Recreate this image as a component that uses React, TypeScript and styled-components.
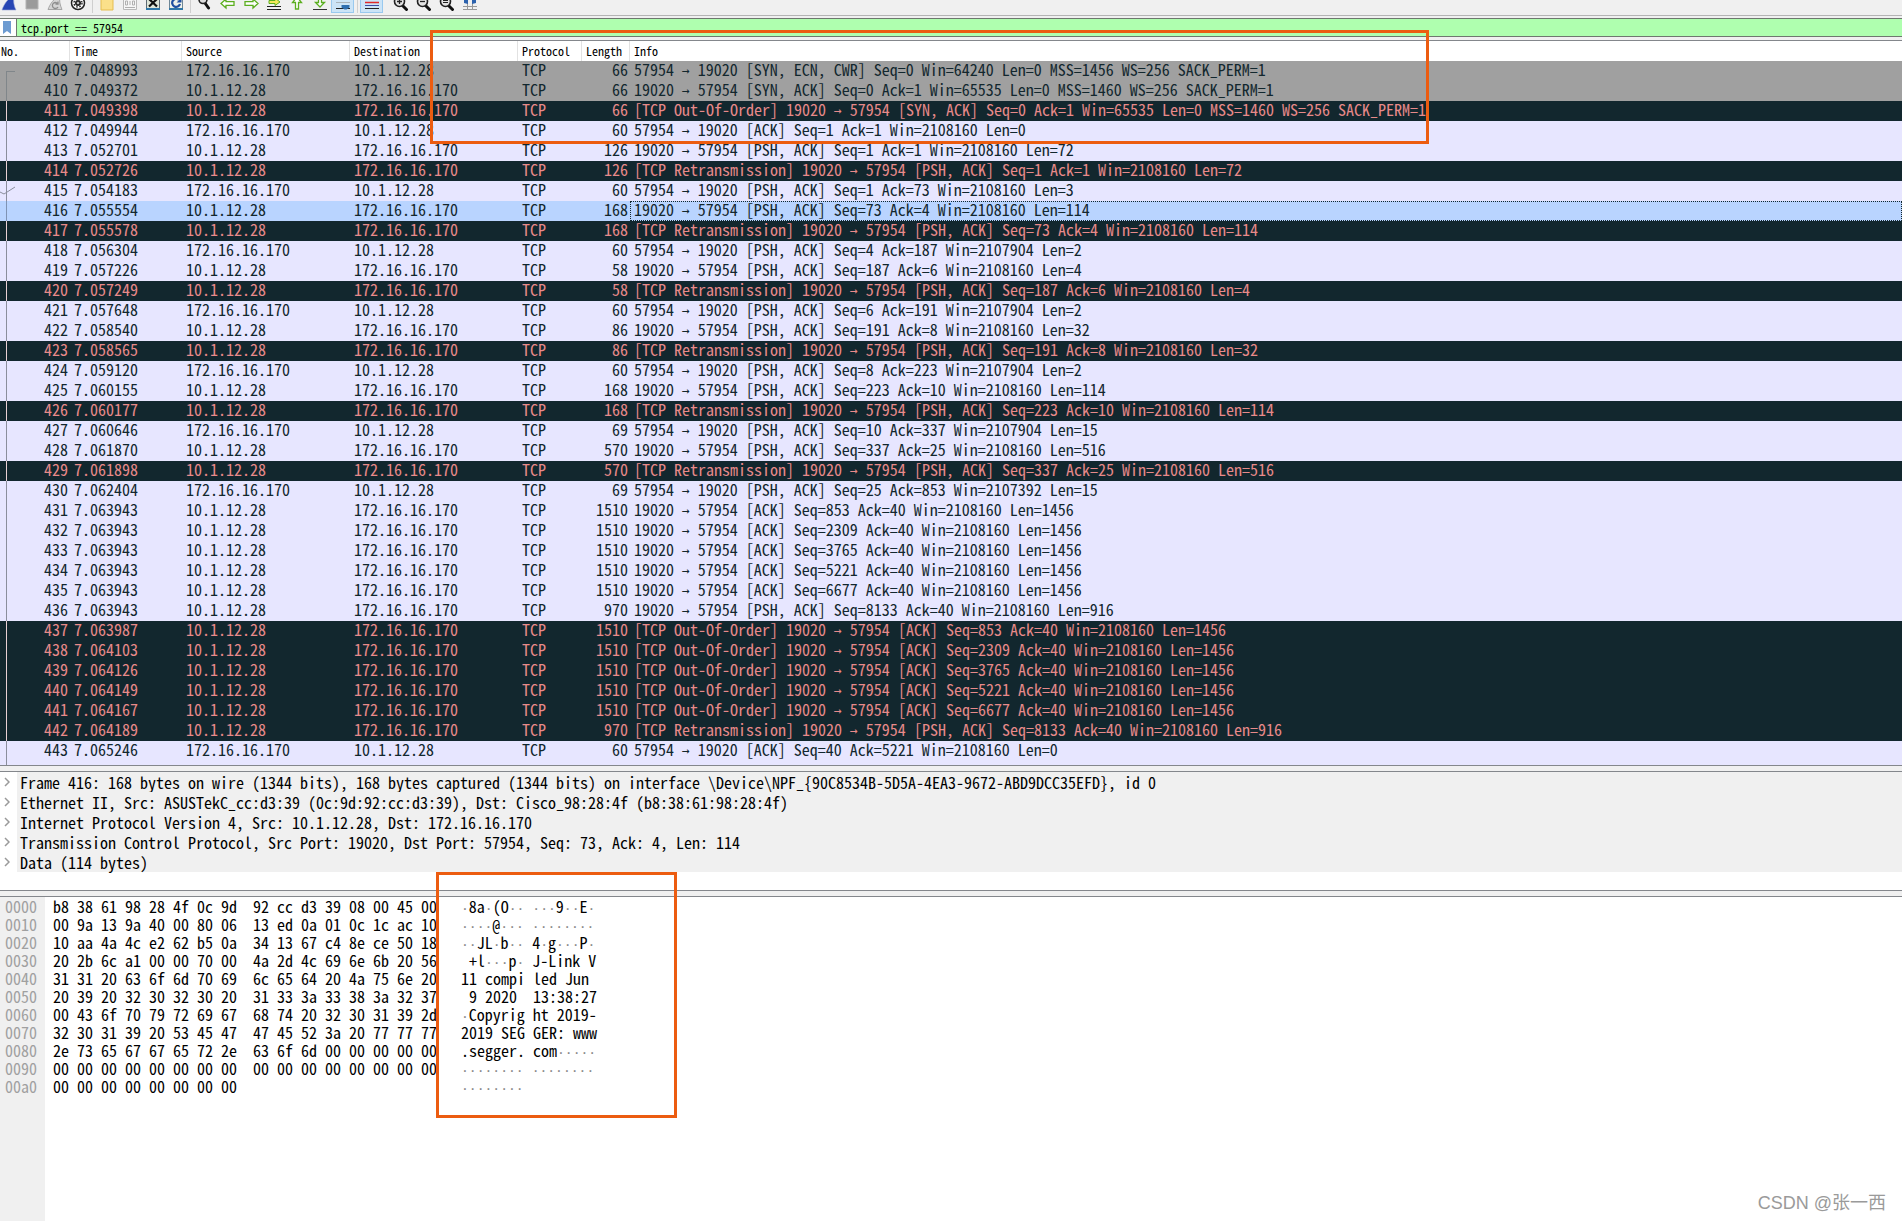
import React from "react";
import styled, { createGlobalStyle, css } from "styled-components";

const MONO = '"Noto Sans Mono CJK SC", "Liberation Mono", monospace';

const Global = createGlobalStyle`
  *, *::before, *::after { box-sizing: border-box; }
  html, body { margin: 0; padding: 0; }
  body { background: #fff; color: #000; font-family: ${MONO}; }
  button, input { font: inherit; color: inherit; margin: 0; padding: 0; border: 0; background: none; border-radius: 0; }
`;

const Window = styled.main`
  position: relative;
  display: flex;
  flex-direction: column;
  min-height: 100vh;
  background: #f0f0f0;
`;

/* ---------- toolbar ---------- */

const Toolbar = styled.div`
  display: flex;
  align-items: flex-end;
  height: 16px;
  margin-left: -3px;
  padding-bottom: 2px;
  border-bottom: 1px solid #b4b4b4;
  overflow: hidden;
`;

const ToolButton = styled.button<{ $on?: boolean }>`
  display: flex;
  justify-content: center;
  align-items: flex-end;
  flex: none;
  width: 23px;
  height: 22px;
  padding-bottom: 2px;
  ${(p) =>
    p.$on &&
    css`
      background: #cce4f7;
      border: 1px solid #99c9ef;
      padding-bottom: 1px;
    `}
`;

const ToolGap = styled.span<{ $line?: boolean }>`
  flex: none;
  width: 6px;
  height: 14px;
  background: ${(p) =>
    p.$line ? "linear-gradient(#cfcfcf, #cfcfcf) center / 1px 100% no-repeat" : "none"};
`;

const Glyph = styled.svg`
  display: block;
  width: 16px;
  height: 16px;
  flex: none;
`;

const magnifier = (
  <>
    <path d="M9.5 10.5 13.5 14.5" stroke="#111" strokeWidth="3" strokeLinecap="round" />
    <circle cx="6.5" cy="6.5" r="5" fill="#e4e4e4" stroke="#222" strokeWidth="1.6" />
  </>
);

const leftArrow = "M1 8.5 6 4v2.7h8v3.6H6V13z";

type Tool = { name: string; art: React.ReactNode; on?: boolean } | "line" | "gap";

const tools: Tool[] = [
  { name: "Start capture", art: <path d="M1 15C3 9 7 3 13 1c-1 5 0 10 2 14z" fill="#2746b4" stroke="#9aa6d6" strokeWidth=".6" /> },
  { name: "Stop capture", art: <path d="M2 2h12v12H2z" fill="#9b9b9b" stroke="#b4b4b4" /> },
  {
    name: "Restart capture",
    art: (
      <>
        <path d="M1 14.500C3 9 7 3 13 1c-1 5 0 9 2 13.500z" fill="#d4d4d4" stroke="#a6a6a6" />
        <path d="M11 9a3 3 0 1 0 0 3M11 6.500V9H8.500" fill="none" stroke="#8e8e8e" strokeWidth="1.300" />
      </>
    ),
  },
  {
    name: "Capture options",
    art: (
      <>
        <circle cx="8" cy="8" r="6.500" fill="#fff" stroke="#222" strokeWidth="1.500" />
        <circle cx="8" cy="8" r="3" fill="#222" />
        <circle cx="8" cy="8" r="4" fill="none" stroke="#222" strokeWidth="1.400" strokeDasharray="1.600 1.600" />
        <circle cx="8" cy="8" r="1.300" fill="#bbb" />
      </>
    ),
  },
  "line",
  { name: "Open", art: <path d="M2 1h8l2 3h2v11H2z" fill="#fbe08a" stroke="#e5bd4e" /> },
  {
    name: "Save",
    art: (
      <>
        <path d="M1.500.5h13v14h-13z" fill="#f6f6f6" stroke="#b9b9b9" />
        <path d="M3.500 6v4h2V6zM8 6v4M10.500 6v4h2V6zM3 12.500h10" fill="none" stroke="#b0b0b0" />
      </>
    ),
  },
  {
    name: "Close",
    art: (
      <>
        <path d="M1.500.5h13v14h-13z" fill="#dfe5d8" stroke="#5d6a72" />
        <path d="M1 14h14" stroke="#2f77a8" strokeWidth="2" />
        <path d="m4 4 8 7.500M12 4l-8 7.500" stroke="#111" strokeWidth="2.200" />
      </>
    ),
  },
  {
    name: "Reload",
    art: (
      <>
        <path d="M1.500.5h13v14h-13z" fill="#eef1ea" stroke="#6e8797" />
        <path d="M1 14h14" stroke="#2f77a8" strokeWidth="2" />
        <path d="M12 9a4 4 0 1 1-1-4" fill="none" stroke="#1f4fa0" strokeWidth="2.200" />
        <path d="M8.500 7.500h5V3z" fill="#1f4fa0" />
      </>
    ),
  },
  "line",
  {
    name: "Find packet",
    art: (
      <>
        <path d="m8 8 3.500 5" stroke="#111" strokeWidth="3" strokeLinecap="round" />
        <circle cx="6" cy="4.500" r="4" fill="#ddd" stroke="#222" strokeWidth="1.600" />
      </>
    ),
  },
  { name: "Previous packet", art: <path d={leftArrow} fill="#fff" stroke="#5bae1f" strokeWidth="1.300" /> },
  { name: "Next packet", art: <path d={leftArrow} transform="matrix(-1 0 0 1 16 0)" fill="#fff" stroke="#5bae1f" strokeWidth="1.300" /> },
  {
    name: "Go to packet",
    art: (
      <>
        <path d="M1 3.500h14M1 11.500h14M1 14.500h14" stroke="#222" />
        <path d="M3 5.500h6V3l5 4-5 3.500V8.500H3z" fill="#f4e95a" stroke="#5bae1f" />
      </>
    ),
  },
  {
    name: "First packet",
    art: <path d="M8 2 3.500 7.500h3V14h3V7.500h3z" fill="#fff" stroke="#5bae1f" strokeWidth="1.300" />,
  },
  {
    name: "Last packet",
    art: (
      <>
        <path d="M8 12 3.500 7.500h3V1h3v6.500h3z" fill="#fff" stroke="#5bae1f" strokeWidth="1.300" />
        <path d="M1 14.500h14" stroke="#333" />
      </>
    ),
  },
  {
    name: "Auto scroll",
    on: true,
    art: (
      <>
        <path d="M1 4.500h14M1 7.500h14" stroke="#a9b3ba" />
        <path d="M1 13.500h14" stroke="#222" />
        <path d="M6.500 10h8v2.500l-3 2h-2l-3-2z" fill="#2e6fb0" />
      </>
    ),
  },
  "line",
  {
    name: "Colorize",
    on: true,
    art: (
      <>
        <path d="M1 1.500h14M1 7.500h14" stroke="#e02a2a" strokeWidth="1.600" />
        <path d="M1 4.500h14M1 10.500h14" stroke="#3c4aa5" />
        <path d="M1 13.500h14" stroke="#222" />
      </>
    ),
  },
  "gap",
  { name: "Zoom in", art: <>{magnifier}<path d="M4 6.500h5M6.500 4v5" stroke="#222" strokeWidth="1.300" /></> },
  { name: "Zoom out", art: <>{magnifier}<path d="M4 6.500h5" stroke="#222" strokeWidth="1.300" /></> },
  { name: "Normal size", art: <>{magnifier}<path d="M4 5.500h5M4 7.500h5" stroke="#222" strokeWidth="1.100" /></> },
  {
    name: "Resize columns",
    art: (
      <>
        <path d="M1 11.500h14M1 14.500h14M5.500 3v12M10.500 3v12" stroke="#999" />
        <path d="M2 3h4v6L2 8zM14 3h-4v6l4-1z" fill="#2c62ad" />
      </>
    ),
  },
];

/* ---------- display filter ---------- */

const FilterBar = styled.label`
  display: flex;
  align-items: stretch;
  height: 19px;
  margin-top: 2px;
  border: solid #6f776f;
  border-width: 1px 0;
  background: #afffaf;
`;

const Bookmark = styled.span`
  display: flex;
  align-items: center;
  width: 17px;
  padding-left: 3px;
  background: #fff;
  border-right: 1px solid #6f776f;
`;

const FilterInput = styled.input`
  flex: 1;
  min-width: 0;
  padding-left: 4px;
  font-size: 12px;
  line-height: 16px;
  outline: none;
`;

/* ---------- packet list ---------- */

type Tone = "syn" | "tcp" | "bad" | "selected";

const tones: Record<Tone, { bg: string; fg: string; line: string }> = {
  syn: { bg: "#a0a0a0", fg: "#12272e", line: "#80868a" },
  tcp: { bg: "#e7e6ff", fg: "#12272e", line: "#8b8e9c" },
  bad: { bg: "#12272e", fg: "#e88a8a", line: "#e8d0d4" },
  selected: { bg: "#b9d4ff", fg: "#12272e", line: "#7f93b4" },
};

const PacketPane = styled.section`
  margin-top: 3px;
  border: solid #84878c;
  border-width: 1px 0;
  background: #fff;
`;

const PacketTable = styled.table`
  width: 100%;
  table-layout: fixed;
  border-collapse: separate;
  border-spacing: 0;
  font-size: 16px;
  line-height: 16px;
`;

const Col = styled.col<{ $w?: number }>`
  width: ${(p) => (p.$w ? `${p.$w}px` : "auto")};
`;

const HeadCell = styled.th<{ $first?: boolean }>`
  height: 20px;
  padding: 0 0 0 ${(p) => (p.$first ? 1 : 4)}px;
  border-right: 1px solid #e2e2e2;
  background: #fff;
  font-size: 12px;
  font-weight: 400;
  line-height: 20px;
  text-align: left;
  white-space: nowrap;
  &:last-child { border-right: 0; }
`;

const PacketRow = styled.tr<{ $tone: Tone }>`
  background: ${(p) => tones[p.$tone].bg};
  color: ${(p) => tones[p.$tone].fg};
  stroke: ${(p) => tones[p.$tone].line};
`;

const Cell = styled.td<{ $right?: boolean; $focus?: boolean }>`
  height: 20px;
  padding: 0 ${(p) => (p.$right ? 2 : 0)}px 0 ${(p) => (p.$right ? 0 : 4)}px;
  text-align: ${(p) => (p.$right ? "right" : "left")};
  vertical-align: top;
  white-space: pre;
  ${(p) =>
    p.$focus &&
    css`
      outline: 1px dotted #12272e;
      outline-offset: -1px;
    `}
`;

const NumberCell = styled.td`
  height: 20px;
  padding: 0 2px 0 0;
  vertical-align: top;
`;

const NumberLine = styled.div`
  display: flex;
  justify-content: space-between;
  align-items: flex-start;
  height: 20px;
`;

const RelationMark = styled.svg`
  display: block;
  flex: none;
  width: 16px;
  height: 20px;
  fill: none;
`;

/* The text face draws arrows and middle dots two cells wide, so they use another one. */
const Arrow = styled.span`
  font-family: "DejaVu Sans Mono", monospace;
  font-size: 13px;
  line-height: 13px;
  vertical-align: 1px;
`;

const PeekRow = styled.div`
  height: 4px;
  overflow: hidden;
  background: ${tones.tcp.bg};
  stroke: ${tones.tcp.line};
`;

const R = "TCP Retransmission";
const O = "TCP Out-Of-Order";
const A = "ACK";
const P = "PSH, ACK";

type Packet = {
  no: number;
  time: string;
  up: boolean; // client (172.16.16.170) to probe (10.1.12.28)
  len: number;
  note: string;
  tail: string;
  tone: Tone;
};

const pk = (no: number, time: string, up: number, len: number, note: string, flags: string, rest: string, tone?: Tone): Packet => ({
  no,
  time: "7." + time,
  up: up === 1,
  len,
  note,
  tail: `[${flags}] ${rest}`,
  tone: tone ?? (note ? "bad" : "tcp"),
});

const packets: Packet[] = [
  pk(409, "048993", 1, 66, "", "SYN, ECN, CWR", "Seq=0 Win=64240 Len=0 MSS=1456 WS=256 SACK_PERM=1", "syn"),
  pk(410, "049372", 0, 66, "", "SYN, ACK", "Seq=0 Ack=1 Win=65535 Len=0 MSS=1460 WS=256 SACK_PERM=1", "syn"),
  pk(411, "049398", 0, 66, O, "SYN, ACK", "Seq=0 Ack=1 Win=65535 Len=0 MSS=1460 WS=256 SACK_PERM=1"),
  pk(412, "049944", 1, 60, "", A, "Seq=1 Ack=1 Win=2108160 Len=0"),
  pk(413, "052701", 0, 126, "", P, "Seq=1 Ack=1 Win=2108160 Len=72"),
  pk(414, "052726", 0, 126, R, P, "Seq=1 Ack=1 Win=2108160 Len=72"),
  pk(415, "054183", 1, 60, "", P, "Seq=1 Ack=73 Win=2108160 Len=3"),
  pk(416, "055554", 0, 168, "", P, "Seq=73 Ack=4 Win=2108160 Len=114", "selected"),
  pk(417, "055578", 0, 168, R, P, "Seq=73 Ack=4 Win=2108160 Len=114"),
  pk(418, "056304", 1, 60, "", P, "Seq=4 Ack=187 Win=2107904 Len=2"),
  pk(419, "057226", 0, 58, "", P, "Seq=187 Ack=6 Win=2108160 Len=4"),
  pk(420, "057249", 0, 58, R, P, "Seq=187 Ack=6 Win=2108160 Len=4"),
  pk(421, "057648", 1, 60, "", P, "Seq=6 Ack=191 Win=2107904 Len=2"),
  pk(422, "058540", 0, 86, "", P, "Seq=191 Ack=8 Win=2108160 Len=32"),
  pk(423, "058565", 0, 86, R, P, "Seq=191 Ack=8 Win=2108160 Len=32"),
  pk(424, "059120", 1, 60, "", P, "Seq=8 Ack=223 Win=2107904 Len=2"),
  pk(425, "060155", 0, 168, "", P, "Seq=223 Ack=10 Win=2108160 Len=114"),
  pk(426, "060177", 0, 168, R, P, "Seq=223 Ack=10 Win=2108160 Len=114"),
  pk(427, "060646", 1, 69, "", P, "Seq=10 Ack=337 Win=2107904 Len=15"),
  pk(428, "061870", 0, 570, "", P, "Seq=337 Ack=25 Win=2108160 Len=516"),
  pk(429, "061898", 0, 570, R, P, "Seq=337 Ack=25 Win=2108160 Len=516"),
  pk(430, "062404", 1, 69, "", P, "Seq=25 Ack=853 Win=2107392 Len=15"),
  pk(431, "063943", 0, 1510, "", A, "Seq=853 Ack=40 Win=2108160 Len=1456"),
  pk(432, "063943", 0, 1510, "", A, "Seq=2309 Ack=40 Win=2108160 Len=1456"),
  pk(433, "063943", 0, 1510, "", A, "Seq=3765 Ack=40 Win=2108160 Len=1456"),
  pk(434, "063943", 0, 1510, "", A, "Seq=5221 Ack=40 Win=2108160 Len=1456"),
  pk(435, "063943", 0, 1510, "", A, "Seq=6677 Ack=40 Win=2108160 Len=1456"),
  pk(436, "063943", 0, 970, "", P, "Seq=8133 Ack=40 Win=2108160 Len=916"),
  pk(437, "063987", 0, 1510, O, A, "Seq=853 Ack=40 Win=2108160 Len=1456"),
  pk(438, "064103", 0, 1510, O, A, "Seq=2309 Ack=40 Win=2108160 Len=1456"),
  pk(439, "064126", 0, 1510, O, A, "Seq=3765 Ack=40 Win=2108160 Len=1456"),
  pk(440, "064149", 0, 1510, O, A, "Seq=5221 Ack=40 Win=2108160 Len=1456"),
  pk(441, "064167", 0, 1510, O, A, "Seq=6677 Ack=40 Win=2108160 Len=1456"),
  pk(442, "064189", 0, 970, R, P, "Seq=8133 Ack=40 Win=2108160 Len=916"),
  pk(443, "065246", 1, 60, "", A, "Seq=40 Ack=5221 Win=2108160 Len=0"),
];

const CLIENT = "172.16.16.170";
const PROBE = "10.1.12.28";

function PacketLine({ p }: { p: Packet }) {
  const first = p.no === 409;
  return (
    <PacketRow $tone={p.tone}>
      <NumberCell>
        <NumberLine>
          <RelationMark viewBox="0 0 16 20" aria-hidden="true">
            <path d={first ? "M6.500 20V10.500H15" : "M6.500 0V20"} shapeRendering="crispEdges" />
            {p.no === 415 && <path d="M0 11 4 13 15 6" />}
          </RelationMark>
          {p.no}
        </NumberLine>
      </NumberCell>
      <Cell>{p.time}</Cell>
      <Cell>{p.up ? CLIENT : PROBE}</Cell>
      <Cell>{p.up ? PROBE : CLIENT}</Cell>
      <Cell>TCP</Cell>
      <Cell $right>{p.len}</Cell>
      <Cell $focus={p.tone === "selected"}>
        {p.note && `[${p.note}] `}
        {p.up ? "57954 " : "19020 "}
        <Arrow>→</Arrow>
        {p.up ? " 19020 " : " 57954 "}
        {p.tail}
      </Cell>
    </PacketRow>
  );
}

/* ---------- packet details ---------- */

const DetailPane = styled.section`
  margin-top: 5px;
  padding-bottom: 18px;
  border: solid #84878c;
  border-width: 1px 0;
  background: #fff;
`;

const DetailRow = styled.div`
  display: flex;
  height: 20px;
  font-size: 16px;
  line-height: 20px;
`;

const Toggle = styled.button`
  display: flex;
  justify-content: center;
  align-items: center;
  flex: none;
  width: 17px;
  padding-right: 3px;
`;

const DetailText = styled.span`
  flex: 1;
  padding-left: 3px;
  background: #f0f0f0;
  white-space: pre;
`;

const details = [
  "Frame 416: 168 bytes on wire (1344 bits), 168 bytes captured (1344 bits) on interface \\Device\\NPF_{90C8534B-5D5A-4EA3-9672-ABD9DCC35EFD}, id 0",
  "Ethernet II, Src: ASUSTekC_cc:d3:39 (0c:9d:92:cc:d3:39), Dst: Cisco_98:28:4f (b8:38:61:98:28:4f)",
  "Internet Protocol Version 4, Src: 10.1.12.28, Dst: 172.16.16.170",
  "Transmission Control Protocol, Src Port: 19020, Dst Port: 57954, Seq: 73, Ack: 4, Len: 114",
  "Data (114 bytes)",
];

/* ---------- packet bytes ---------- */

const BytesPane = styled.section`
  display: flex;
  flex: 1;
  margin-top: 5px;
  border-top: 1px solid #84878c;
  background: #fff;
  font-size: 16px;
  line-height: 18px;
  white-space: pre;
`;

const Offsets = styled.div`
  flex: none;
  width: 45px;
  padding-left: 5px;
  background: #f0f0f0;
  color: #a0a0a0;
`;

const Hex = styled.div`
  flex: none;
  width: 408px;
  padding-left: 8px;
`;

const Ascii = styled.div`
  padding-left: 8px;
`;

const ByteLine = styled.div`
  height: 18px;
`;

const Dots = styled.span`
  color: #8c8c8c;
  font-family: "DejaVu Sans Mono", monospace;
  font-size: 13px;
  line-height: 13px;
`;

const bytes: [string, string, string][] = [
  ["0000", "b8 38 61 98 28 4f 0c 9d  92 cc d3 39 08 00 45 00", "·8a·(O·· ···9··E·"],
  ["0010", "00 9a 13 9a 40 00 80 06  13 ed 0a 01 0c 1c ac 10", "····@··· ········"],
  ["0020", "10 aa 4a 4c e2 62 b5 0a  34 13 67 c4 8e ce 50 18", "··JL·b·· 4·g···P·"],
  ["0030", "20 2b 6c a1 00 00 70 00  4a 2d 4c 69 6e 6b 20 56", " +l···p· J-Link V"],
  ["0040", "31 31 20 63 6f 6d 70 69  6c 65 64 20 4a 75 6e 20", "11 compi led Jun "],
  ["0050", "20 39 20 32 30 32 30 20  31 33 3a 33 38 3a 32 37", " 9 2020  13:38:27"],
  ["0060", "00 43 6f 70 79 72 69 67  68 74 20 32 30 31 39 2d", "·Copyrig ht 2019-"],
  ["0070", "32 30 31 39 20 53 45 47  47 45 52 3a 20 77 77 77", "2019 SEG GER: www"],
  ["0080", "2e 73 65 67 67 65 72 2e  63 6f 6d 00 00 00 00 00", ".segger. com·····"],
  ["0090", "00 00 00 00 00 00 00 00  00 00 00 00 00 00 00 00", "········ ········"],
  ["00a0", "00 00 00 00 00 00 00 00", "········"],
];

const withDots = (text: string) =>
  text.split(/(·+)/).map((part, i) => (part.startsWith("·") ? <Dots key={i}>{part}</Dots> : part));

/* ---------- annotations ---------- */

const Highlight = styled.div<{ $x: number; $y: number; $w: number; $h: number }>`
  position: absolute;
  left: ${(p) => p.$x}px;
  top: ${(p) => p.$y}px;
  width: ${(p) => p.$w}px;
  height: ${(p) => p.$h}px;
  border: 3px solid #ec5c10;
  pointer-events: none;
`;

const Watermark = styled.div`
  position: absolute;
  right: 16px;
  bottom: 6px;
  color: #9a9a9a;
  font-family: "Liberation Sans", "Noto Sans CJK SC", sans-serif;
  font-size: 18px;
  line-height: 24px;
`;

export default function App() {
  return (
    <Window>
      <Global />
      <Toolbar role="toolbar" aria-label="Main">
        {tools.map((t, i) =>
          typeof t === "string" ? (
            <ToolGap key={i} $line={t === "line"} />
          ) : (
            <ToolButton key={i} $on={t.on} aria-label={t.name}>
              <Glyph viewBox="0 0 16 16" fill="none" aria-hidden="true">{t.art}</Glyph>
            </ToolButton>
          )
        )}
      </Toolbar>

      <FilterBar>
        <Bookmark>
          <svg width="8" height="13" viewBox="0 0 8 13" aria-hidden="true">
            <path d="M0 0h8v13L4 10l-4 3z" fill="#6d9bd1" />
          </svg>
        </Bookmark>
        <FilterInput aria-label="Display filter" defaultValue="tcp.port == 57954" spellCheck={false} />
      </FilterBar>

      <PacketPane>
        <PacketTable>
          <colgroup>
            <Col $w={70} />
            <Col $w={112} />
            <Col $w={168} />
            <Col $w={168} />
            <Col $w={64} />
            <Col $w={48} />
            <Col />
          </colgroup>
          <thead>
            <tr>
              <HeadCell $first>No.</HeadCell>
              <HeadCell>Time</HeadCell>
              <HeadCell>Source</HeadCell>
              <HeadCell>Destination</HeadCell>
              <HeadCell>Protocol</HeadCell>
              <HeadCell>Length</HeadCell>
              <HeadCell>Info</HeadCell>
            </tr>
          </thead>
          <tbody>
            {packets.map((p) => (
              <PacketLine key={p.no} p={p} />
            ))}
          </tbody>
        </PacketTable>
        <PeekRow>
          <RelationMark viewBox="0 0 16 20" aria-hidden="true">
            <path d="M6.500 0V20" shapeRendering="crispEdges" />
          </RelationMark>
        </PeekRow>
      </PacketPane>

      <DetailPane>
        {details.map((d) => (
          <DetailRow key={d}>
            <Toggle aria-label="Expand">
              <svg width="6" height="10" viewBox="0 0 6 10" fill="none" aria-hidden="true">
                <path d="M1 1l4 4-4 4" stroke="#9a9a9a" strokeWidth="1.500" />
              </svg>
            </Toggle>
            <DetailText>{d}</DetailText>
          </DetailRow>
        ))}
      </DetailPane>

      <BytesPane>
        <Offsets>{bytes.map(([o]) => <ByteLine key={o}>{o}</ByteLine>)}</Offsets>
        <Hex>{bytes.map(([o, h]) => <ByteLine key={o}>{h}</ByteLine>)}</Hex>
        <Ascii>{bytes.map(([o, , a]) => <ByteLine key={o}>{withDots(a)}</ByteLine>)}</Ascii>
      </BytesPane>

      <Highlight $x={430} $y={30} $w={999} $h={114} />
      <Highlight $x={436} $y={872} $w={241} $h={246} />
      <Watermark>CSDN @张一西</Watermark>
    </Window>
  );
}
